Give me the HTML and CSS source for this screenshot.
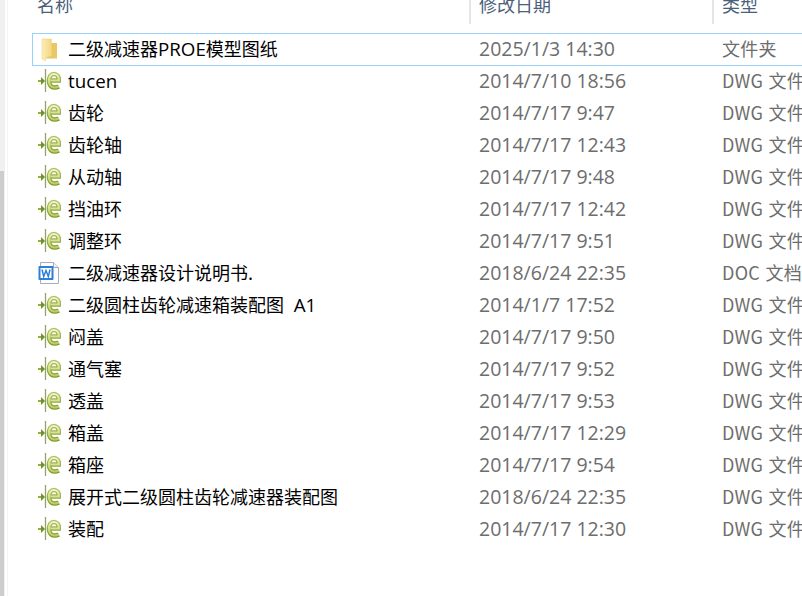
FILE: index.html
```html
<!DOCTYPE html>
<html lang="zh">
<head>
<meta charset="utf-8">
<title>文件列表</title>
<link rel="stylesheet" href="styles.css">
</head>
<body>
<svg class="defs" width="0" height="0" aria-hidden="true">
  <defs>
    <linearGradient id="eo" x1="0" y1="0" x2="0" y2="1"><stop offset="0" stop-color="#aebf5e"/><stop offset="1" stop-color="#7f9a2c"/></linearGradient>
    <linearGradient id="ei" x1="0" y1="0" x2="0" y2="1"><stop offset="0" stop-color="#eef3c0"/><stop offset="1" stop-color="#bccf62"/></linearGradient>
    <linearGradient id="fg" x1="0" y1="0" x2="1" y2="0"><stop offset="0" stop-color="#fdeeb4"/><stop offset="1" stop-color="#f4d67f"/></linearGradient>
    <symbol id="dwg" viewBox="0 0 24 24">
      <path d="M1 12h3.500" stroke="#8fb03a" stroke-width="2" fill="none"/>
      <path d="M4 8l4 4-4 4z" fill="#6f9226"/>
      <path d="M8.500 0v23" stroke="#93a363" stroke-width="1.300" fill="none"/>
      <path d="M13.500 11.500h8.500c0-4-2.300-6.500-5-6.500-3 0-5 2.800-5 6.800 0 4.200 2.300 6.700 5.500 6.700 1.700 0 3-.3 4.300-1" fill="none" stroke="url(#eo)" stroke-width="4.600"/>
      <path d="M13.500 11.500h8.500c0-4-2.300-6.500-5-6.500-3 0-5 2.800-5 6.800 0 4.200 2.300 6.700 5.500 6.700 1.700 0 3-.3 4.300-1" fill="none" stroke="url(#ei)" stroke-width="2.200"/>
    </symbol>
    <symbol id="folder" viewBox="0 0 24 24">
      <path d="M7 1h6.500v4H20v15.500H9z" fill="#e9c766"/>
      <path d="M5 1l9.500 0v17l-6 1.500v3.500L5 21z" fill="url(#fg)" stroke="#ecd28a" stroke-width=".5"/>
    </symbol>
    <symbol id="doc" viewBox="0 0 24 24">
      <path d="M3.500 1.500h13l5 5v16h-18z" fill="#fff" stroke="#a9adb6"/>
      <path d="M16.500 1.500v5h5" fill="#f0f0f0" stroke="#a9adb6"/>
      <rect x="1.500" y="5" width="15" height="14" rx="1" fill="#2e7fd8"/>
      <rect x="3.500" y="7" width="11" height="10" fill="#fff"/>
      <path d="M5 8.500l1.700 7 2.300-6 2.300 6 1.700-7" fill="none" stroke="#2e7fd8" stroke-width="1.500"/>
    </symbol>
  </defs>
</svg>
<div class="window">
  <div class="rail"><div class="thumb"></div></div>
  <main class="pane">
    <header class="head">
      <div class="c-name">名称</div>
      <div class="c-date">修改日期</div>
      <div class="c-type">类型</div>
    </header>
    <div class="list">
      <div class="row selected"><span class="c-name"><svg class="ico"><use href="#folder"/></svg><span>二级减速器<span class="lat">PROE</span>模型图纸</span></span><span class="c-date">2025/1/3 14:30</span><span class="c-type">文件夹</span></div>
      <div class="row"><span class="c-name"><svg class="ico"><use href="#dwg"/></svg><span class="lat solo">tucen</span></span><span class="c-date">2014/7/10 18:56</span><span class="c-type">DWG 文件</span></div>
      <div class="row"><span class="c-name"><svg class="ico"><use href="#dwg"/></svg>齿轮</span><span class="c-date">2014/7/17 9:47</span><span class="c-type">DWG 文件</span></div>
      <div class="row"><span class="c-name"><svg class="ico"><use href="#dwg"/></svg>齿轮轴</span><span class="c-date">2014/7/17 12:43</span><span class="c-type">DWG 文件</span></div>
      <div class="row"><span class="c-name"><svg class="ico"><use href="#dwg"/></svg>从动轴</span><span class="c-date">2014/7/17 9:48</span><span class="c-type">DWG 文件</span></div>
      <div class="row"><span class="c-name"><svg class="ico"><use href="#dwg"/></svg>挡油环</span><span class="c-date">2014/7/17 12:42</span><span class="c-type">DWG 文件</span></div>
      <div class="row"><span class="c-name"><svg class="ico"><use href="#dwg"/></svg>调整环</span><span class="c-date">2014/7/17 9:51</span><span class="c-type">DWG 文件</span></div>
      <div class="row"><span class="c-name"><svg class="ico"><use href="#doc"/></svg>二级减速器设计说明书.</span><span class="c-date">2018/6/24 22:35</span><span class="c-type">DOC 文档</span></div>
      <div class="row"><span class="c-name"><svg class="ico"><use href="#dwg"/></svg><span>二级圆柱齿轮减速箱装配图<span class="lat">&nbsp;&nbsp;A1</span></span></span><span class="c-date">2014/1/7 17:52</span><span class="c-type">DWG 文件</span></div>
      <div class="row"><span class="c-name"><svg class="ico"><use href="#dwg"/></svg>闷盖</span><span class="c-date">2014/7/17 9:50</span><span class="c-type">DWG 文件</span></div>
      <div class="row"><span class="c-name"><svg class="ico"><use href="#dwg"/></svg>通气塞</span><span class="c-date">2014/7/17 9:52</span><span class="c-type">DWG 文件</span></div>
      <div class="row"><span class="c-name"><svg class="ico"><use href="#dwg"/></svg>透盖</span><span class="c-date">2014/7/17 9:53</span><span class="c-type">DWG 文件</span></div>
      <div class="row"><span class="c-name"><svg class="ico"><use href="#dwg"/></svg>箱盖</span><span class="c-date">2014/7/17 12:29</span><span class="c-type">DWG 文件</span></div>
      <div class="row"><span class="c-name"><svg class="ico"><use href="#dwg"/></svg>箱座</span><span class="c-date">2014/7/17 9:54</span><span class="c-type">DWG 文件</span></div>
      <div class="row"><span class="c-name"><svg class="ico"><use href="#dwg"/></svg>展开式二级圆柱齿轮减速器装配图</span><span class="c-date">2018/6/24 22:35</span><span class="c-type">DWG 文件</span></div>
      <div class="row"><span class="c-name"><svg class="ico"><use href="#dwg"/></svg>装配</span><span class="c-date">2014/7/17 12:30</span><span class="c-type">DWG 文件</span></div>
    </div>
  </main>
</div>
</body>
</html>
```

FILE: styles.css
```css
html, body {
  margin: 0;
  padding: 0;
  height: 100%;
  overflow: hidden;
  background: #fff;
}
.defs { display: block; height: 0; }
.window {
  display: flex;
  width: 802px;
  height: 596px;
  overflow: hidden;
  font-family: "Noto Sans CJK SC", "Noto Sans", sans-serif;
  font-size: 18px;
}
.rail {
  flex: 0 0 5px;
  background: #f0f0f0;
  padding-top: 171px;
}
.thumb { width: 4px; height: 425px; background: #cdcdcd; }
.pane {
  flex: 1;
  min-width: 0;
  display: flex;
  flex-direction: column;
  margin-left: 2px;
  padding-left: 24px;
  border-left: 1px solid #f5f5f5;
}
.head {
  display: flex;
  height: 24px;
  margin-bottom: 9px;
  line-height: 8px;
  overflow: hidden;
}
.c-name {
  flex: 0 0 437px;
  display: flex;
  align-items: center;
  padding-left: 5px;
  box-sizing: border-box;
  white-space: nowrap;
  overflow: hidden;
}
.lat { font-family: "Open Sans", sans-serif; font-size: 18.75px; }
.lat.solo { margin-top: 2px; }
.c-date {
  flex: 0 0 243px;
  padding-left: 10px;
  box-sizing: border-box;
  color: #6d6d6d;
  white-space: nowrap;
  font-family: "Open Sans", "Noto Sans CJK SC", sans-serif;
  font-size: 19.5px;
}
.c-type {
  flex: 0 0 auto;
  padding-left: 10px;
  color: #6d6d6d;
  white-space: nowrap;
  word-spacing: 1px;
  letter-spacing: .3px;
}
.head .c-name,
.head .c-date,
.head .c-type {
  display: block;
  color: #4c607a;
  font-family: "Noto Sans CJK SC", sans-serif;
  font-size: 18px;
  letter-spacing: 0;
}
.head .c-date,
.head .c-type { border-left: 2px solid #e5e5e5; padding-left: 8px; }
.list { display: flex; flex-direction: column; }
.row {
  display: flex;
  align-items: center;
  height: 32px;
  line-height: 30px;
  color: #000;
  box-sizing: border-box;
  white-space: nowrap;
}
.row > .c-name,
.row > .c-type { padding-bottom: 2px; }
.row.selected { border: 1px solid #99d1ff; border-right: 0; height: 33px; margin-bottom: -1px; }
.row.selected .c-name { flex-basis: 436px; padding-left: 4px; padding-bottom: 2px; }
.row.selected .c-date { padding-bottom: 2px; }
.row.selected .c-type { padding-bottom: 4px; }
.ico { width: 24px; height: 24px; margin-right: 7px; margin-top: 2px; flex: none; }
```
